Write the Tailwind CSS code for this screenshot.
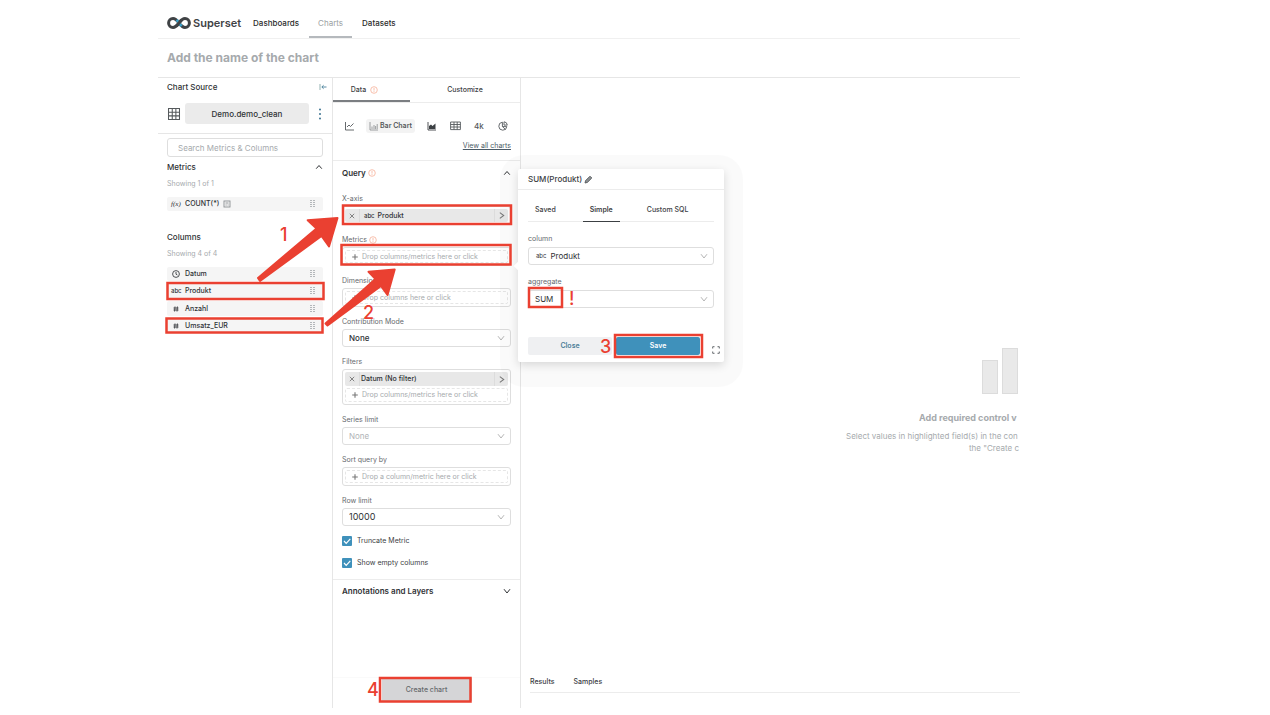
<!DOCTYPE html>
<html lang="en">
<head>
    <meta charset="UTF-8">
    <meta name="viewport" content="width=device-width, initial-scale=1.0">
    <title>Superset - Charts</title>
    <script src="https://cdn.jsdelivr.net/npm/@tailwindcss/browser@4"></script>
</head>
<body class="relative bg-white font-['Inter','Liberation_Sans',sans-serif] text-[7px] leading-[14px] text-[#3c4043]">

    <!-- shared icons -->
    <svg class="hidden">
        <symbol id="grip" viewBox="0 0 6 8"><g fill="#b4b7ba"><rect x="0" y="0" width="2" height="1"/><rect x="3" y="0" width="2" height="1"/><rect x="0" y="2" width="2" height="1"/><rect x="3" y="2" width="2" height="1"/><rect x="0" y="4" width="2" height="1"/><rect x="3" y="4" width="2" height="1"/><rect x="0" y="6" width="2" height="1"/><rect x="3" y="6" width="2" height="1"/></g></symbol>
        <symbol id="down" viewBox="0 0 8 8"><path d="M1 2.200 4 6l3-3.800" fill="none" stroke="currentColor" stroke-width="1"/></symbol>
        <symbol id="up" viewBox="0 0 8 8"><path d="M1.200 5.700 4 2.500l2.800 3.200" fill="none" stroke="currentColor" stroke-width="1"/></symbol>
        <symbol id="right" viewBox="0 0 8 8"><path d="M2.500 1.400 6 4 2.500 6.600" fill="none" stroke="currentColor" stroke-width=".9"/></symbol>
        <symbol id="cross" viewBox="0 0 8 8"><path d="M1.800 1.800l4.400 4.400M6.200 1.800 1.800 6.200" fill="none" stroke="currentColor" stroke-width=".9"/></symbol>
        <symbol id="plus" viewBox="0 0 8 8"><path d="M4 1.200v5.600M1.200 4h5.600" fill="none" stroke="currentColor" stroke-width="1.100"/></symbol>
        <symbol id="alert" viewBox="0 0 8 8"><circle cx="4" cy="4" r="3.300" fill="none" stroke="#f7b9a4" stroke-width=".9"/><path d="M4 2v2.600M4 5.200v.9" stroke="#f7b9a4" stroke-width=".9"/></symbol>
        <symbol id="hash" viewBox="0 0 8 8"><path d="M3 1.500 2.600 6.500M5.400 1.500 5 6.500M1.500 3h5M1.500 5h5" fill="none" stroke="#3c4043" stroke-width=".9"/></symbol>
        <symbol id="table" viewBox="0 0 12 12"><path d="M1.300 1.300h9.400v9.400H1.300zM1.300 4.500h9.400M1.300 7.600h9.400M4.500 1.300v9.400M7.600 1.300v9.400" fill="none" stroke="currentColor" stroke-width=".9"/></symbol>
        <symbol id="check" viewBox="0 0 10 10"><path d="M2 5l2.200 2.300L8.300 2.800" fill="none" stroke="#fff" stroke-width="1.200"/></symbol>
    </svg>

    <div class="ml-[158px] mr-[250px] flex flex-col">

        <!-- top navigation -->
        <header class="flex h-[39px] items-stretch border-b border-[#f0f0f0] pl-2 text-[8px] font-medium text-[#2b2b2b]">
            <a href="#" class="flex items-center pt-2 pr-1">
                <svg class="h-[14px] w-[26px]" viewBox="0 0 26 14" fill="none" stroke-width="3">
                    <path d="M13 7C10.800 4 9.300 2.600 7 2.600a4.400 4.400 0 0 0 0 8.800c2.300 0 3.800-1.400 6-4.400" stroke="#3f4245"/>
                    <path d="M13 7c2.200-3 3.700-4.400 6-4.400a4.400 4.400 0 0 1 0 8.800c-2.300 0-3.800-1.400-6-4.400" stroke="#3f4245"/>
                    <path d="M10.600 3.900 13.200 7M13 7.200l2.600 3" stroke="#3aa3cc" stroke-width="2.600"/>
                    <path d="M10.300 10.200 15.700 3.800" stroke="#3f4245"/>
                </svg>
                <span class="pl-px text-[11px] font-semibold text-[#3f4245]">Superset</span>
            </a>
            <nav class="flex items-stretch">
                <a href="#" class="flex items-center pt-2 pr-[10px] pl-2">Dashboards</a>
                <a href="#" class="flex items-center border-b-2 border-[#b5b9bd] px-[9px] pt-[10px] font-normal text-[#9b9fa3]">Charts</a>
                <a href="#" class="flex items-center px-[10px] pt-2">Datasets</a>
            </nav>
        </header>

        <div class="flex h-[39px] items-center border-b border-[#e6e6e6] pl-[9px]">
            <input type="text" aria-label="Chart name" placeholder="Add the name of the chart" class="w-full text-[12px] font-bold outline-none placeholder:text-[#a6aaad]">
        </div>

        <div class="flex h-[630px] items-stretch">

            <!-- chart source -->
            <aside class="flex w-[175px] shrink-0 flex-col border-r border-[#e6e6e6]">
                <div class="flex h-[18px] items-center justify-between pr-[5px] pl-[9px] text-[8px] font-medium text-[#2f3235]">
                    <h2>Chart Source</h2>
                    <svg class="size-2" viewBox="0 0 8 8" fill="none" stroke-width=".9"><path d="M1 1v6" stroke="#8aa"/><path d="M7.500 4H3M4.600 2.300 2.800 4l1.800 1.700" stroke="#47809b"/></svg>
                </div>
                <div class="mt-[7px] flex items-center pr-[10px] pl-[9px]">
                    <svg class="size-[14px] text-[#55595c]"><use href="#table"/></svg>
                    <button type="button" class="ml-1 h-[21px] flex-1 rounded-[3px] bg-[#ebebeb] text-[8px] font-medium text-[#2f3235]">Demo.demo_clean</button>
                    <svg class="ml-[9px] h-3 w-1" viewBox="0 0 4 12" fill="#3c7391"><circle cx="2" cy="1.500" r="1"/><circle cx="2" cy="6" r="1"/><circle cx="2" cy="10.500" r="1"/></svg>
                </div>
                <div class="mt-[9px] border-t border-[#e6e6e6] pt-1 pr-[9px] pl-[9px]">
                    <input type="search" aria-label="Search Metrics &amp; Columns" placeholder="Search Metrics &amp; Columns" class="block h-[19px] w-full rounded-[3px] border border-[#dedede] px-[10px] text-[8px] outline-none placeholder:text-[#a6aaad]">

                    <div class="mt-[3px] flex items-center justify-between text-[8px] font-medium text-[#2f3235]">
                        <h3>Metrics</h3>
                        <svg class="size-2"><use href="#up"/></svg>
                    </div>
                    <p class="mt-[3px] text-[#a6aaad]">Showing 1 of 1</p>
                    <div class="mt-[6px] flex h-[14px] items-center rounded-[2px] bg-[#f5f5f5] pr-[7px] pl-1 text-[#2f3235]">
                        <i class="w-[14px] font-['Liberation_Serif',serif] text-[7px]">f(x)</i>
                        <span class="font-medium">COUNT(*)</span>
                        <svg class="ml-1 size-2" viewBox="0 0 8 8" fill="none" stroke="#8c9093" stroke-width=".9"><rect x="1" y="1" width="6" height="6"/><path d="M2.500 3h3M2.500 5h1.200M4.600 5h1"/></svg>
                        <svg class="ml-auto h-2 w-[6px]"><use href="#grip"/></svg>
                    </div>

                    <h3 class="mt-[19px] text-[8px] font-medium text-[#2f3235]">Columns</h3>
                    <p class="mt-[3px] text-[#a6aaad]">Showing 4 of 4</p>
                    <ul class="mt-[6px] flex flex-col gap-[3px] font-medium text-[#2f3235]">
                        <li class="flex h-[14px] items-center rounded-[2px] bg-[#f5f5f5] pr-[7px] pl-1">
                            <span class="w-[14px]"><svg class="ml-px size-2" viewBox="0 0 8 8" fill="none" stroke="#3c4043" stroke-width=".9"><circle cx="4" cy="4" r="3.400"/><path d="M4 2v2.200l1.400.8"/></svg></span>
                            <span>Datum</span>
                            <svg class="ml-auto h-2 w-[6px]"><use href="#grip"/></svg>
                        </li>
                        <li class="flex h-[14px] items-center rounded-[2px] bg-[#f5f5f5] pr-[7px] pl-1">
                            <span class="w-[14px] text-[6px]">abc</span>
                            <span>Produkt</span>
                            <svg class="ml-auto h-2 w-[6px]"><use href="#grip"/></svg>
                        </li>
                        <li class="flex h-[15px] items-center rounded-[2px] bg-[#f5f5f5] pr-[7px] pl-1">
                            <span class="w-[14px]"><svg class="ml-px size-2"><use href="#hash"/></svg></span>
                            <span>Anzahl</span>
                            <svg class="ml-auto h-2 w-[6px]"><use href="#grip"/></svg>
                        </li>
                        <li class="flex h-[14px] items-center rounded-[2px] bg-[#f5f5f5] pr-[7px] pl-1">
                            <span class="w-[14px]"><svg class="ml-px size-2"><use href="#hash"/></svg></span>
                            <span>Umsatz_EUR</span>
                            <svg class="ml-auto h-2 w-[6px]"><use href="#grip"/></svg>
                        </li>
                    </ul>
                </div>
            </aside>

            <!-- controls -->
            <section class="flex w-[188px] shrink-0 flex-col border-r border-[#e6e6e6]">
                <div class="flex h-[25px] border-b border-[#ececec] font-medium">
                    <button type="button" class="flex w-[77px] items-center justify-center gap-1 border-b-2 border-[#7b7e82] pt-[2px] pr-[14px]">Data <svg class="size-2"><use href="#alert"/></svg></button>
                    <button type="button" class="flex-1">Customize</button>
                </div>

                <div class="border-b border-[#ececec] px-[9px] pt-4 pb-[7px]">
                    <div class="flex items-center text-[#55595c]">
                        <svg class="ml-[2px] h-[10px] w-[11px]" viewBox="0 0 11 10" fill="none" stroke="currentColor" stroke-width=".9"><path d="M1.500 1v8H10M3 6l2-2 1.500 1.500L9.500 2.500"/></svg>
                        <button type="button" class="ml-[11px] flex h-[14px] items-center gap-[2px] rounded-[3px] bg-[#f3f3f3] px-[3px] font-semibold">
                            <svg class="h-[10px] w-[9px]" viewBox="0 0 9 10" fill="none" stroke="#85898c" stroke-width=".8"><path d="M1 1v8h8M3 8V5.500M5 8V4M6.600 8V5M8.200 8V3"/></svg>
                            Bar Chart
                        </button>
                        <svg class="ml-3 h-[10px] w-[9px]" viewBox="0 0 9 10"><path d="M1 1v8h8" fill="none" stroke="#3c4043" stroke-width=".9"/><path d="M2 8V5l2-1.500L5.500 5 8.500 2.500V8z" fill="#3c4043"/></svg>
                        <svg class="ml-[14px] h-[10px] w-[11px]" viewBox="0 0 11 10" fill="none" stroke="currentColor" stroke-width=".9"><path d="M.6 1h9.800v7.600H.6zM.6 3.500h9.800M.6 6h9.800M4 1v7.600M7.200 1v7.600"/></svg>
                        <span class="ml-[13px] text-[8px] font-medium">4k</span>
                        <svg class="ml-[14px] size-[10px]" viewBox="0 0 10 10" fill="none" stroke="currentColor" stroke-width=".9"><path d="M4.400 1.200a4 4 0 1 0 4.400 4.400H4.400zM4.500 5.600l2.900 2.800M6 .8a3.600 3.600 0 0 1 3.300 3.300H6z"/></svg>
                    </div>
                    <div class="mt-[6px] text-right"><a href="#" class="text-[#4b5a66] underline">View all charts</a></div>
                </div>

                <div class="px-[9px] pt-[5px]">
                    <div class="flex items-center gap-[2px] text-[8px] font-medium text-[#2f3235]">
                        <h3 class="font-semibold">Query</h3>
                        <svg class="size-2"><use href="#alert"/></svg>
                        <svg class="ml-auto size-2"><use href="#up"/></svg>
                    </div>

                    <div class="mt-3 flex flex-col gap-2 text-[#666a6e]">
                        <div>
                            <p>X-axis</p>
                            <div class="h-[19px] rounded-[3px] border border-[#dedede] p-[2px]">
                                <div class="flex h-[13px] items-center rounded-[2px] bg-[#e8e8e8] font-medium text-[#2f3235]">
                                    <svg class="mx-[3px] size-2 text-[#777]"><use href="#cross"/></svg>
                                    <span class="h-full border-l border-[#dcdcdc] pl-1 text-[6px]">abc</span>
                                    <span class="pl-[3px]">Produkt</span>
                                    <span class="ml-auto flex h-full items-center border-l border-[#dcdcdc] px-[2px]"><svg class="size-[9px] text-[#777]"><use href="#right"/></svg></span>
                                </div>
                            </div>
                        </div>
                        <div>
                            <p class="flex items-center gap-[2px]">Metrics <svg class="size-2"><use href="#alert"/></svg></p>
                            <div class="h-[19px] rounded-[3px] border border-[#dedede] p-[2px]">
                                <button type="button" class="flex h-[13px] w-full items-center gap-[3px] rounded-[2px] border border-dashed border-[#e6e6e6] pl-[5px] text-[#a6aaad]"><svg class="size-2 text-[#777]"><use href="#plus"/></svg>Drop columns/metrics here or click</button>
                            </div>
                        </div>
                        <div>
                            <p>Dimensions</p>
                            <div class="h-[19px] rounded-[3px] border border-[#dedede] p-[2px]">
                                <button type="button" class="flex h-[13px] w-full items-center gap-[3px] rounded-[2px] border border-dashed border-[#e6e6e6] pl-[5px] text-[#a6aaad]"><svg class="size-2 text-[#777]"><use href="#plus"/></svg>Drop columns here or click</button>
                            </div>
                        </div>
                        <div>
                            <label for="contribution" class="block">Contribution Mode</label>
                            <div class="relative">
                                <select id="contribution" class="block h-[18px] w-full appearance-none rounded-[3px] border border-[#dedede] pl-[6px] text-[8px] font-medium text-[#2f3235]"><option>None</option></select>
                                <svg class="pointer-events-none absolute top-[5px] right-[6px] size-2 text-[#b5b5b5]"><use href="#down"/></svg>
                            </div>
                        </div>
                        <div>
                            <p>Filters</p>
                            <div class="flex h-[36px] flex-col justify-between rounded-[3px] border border-[#dedede] p-[2px]">
                                <div class="flex h-[14px] items-center rounded-[2px] bg-[#e8e8e8] font-medium text-[#2f3235]">
                                    <svg class="mx-[3px] size-2 text-[#777]"><use href="#cross"/></svg>
                                    <span class="h-full border-l border-[#dcdcdc] pl-px">Datum (No filter)</span>
                                    <span class="ml-auto flex h-full items-center border-l border-[#dcdcdc] px-[2px]"><svg class="size-[9px] text-[#777]"><use href="#right"/></svg></span>
                                </div>
                                <button type="button" class="flex h-[14px] w-full items-center gap-[3px] rounded-[2px] border border-dashed border-[#e6e6e6] pl-[5px] text-[#a6aaad]"><svg class="size-2 text-[#777]"><use href="#plus"/></svg>Drop columns/metrics here or click</button>
                            </div>
                        </div>
                        <div>
                            <label for="series" class="block">Series limit</label>
                            <div class="relative">
                                <select id="series" class="block h-[18px] w-full appearance-none rounded-[3px] border border-[#dedede] pl-[6px] text-[8px] text-[#b0b3b6]"><option>None</option></select>
                                <svg class="pointer-events-none absolute top-[5px] right-[6px] size-2 text-[#b5b5b5]"><use href="#down"/></svg>
                            </div>
                        </div>
                        <div>
                            <p>Sort query by</p>
                            <div class="h-[19px] rounded-[3px] border border-[#dedede] p-[2px]">
                                <button type="button" class="flex h-[13px] w-full items-center gap-[3px] rounded-[2px] border border-dashed border-[#e6e6e6] pl-[5px] text-[#a6aaad]"><svg class="size-2 text-[#777]"><use href="#plus"/></svg>Drop a column/metric here or click</button>
                            </div>
                        </div>
                        <div>
                            <label for="rows" class="block">Row limit</label>
                            <div class="relative">
                                <select id="rows" class="block h-[18px] w-full appearance-none rounded-[3px] border border-[#dedede] pl-[6px] text-[9px] text-[#2f3235]"><option>10000</option></select>
                                <svg class="pointer-events-none absolute top-[5px] right-[6px] size-2 text-[#b5b5b5]"><use href="#down"/></svg>
                            </div>
                        </div>
                        <label class="relative flex items-center gap-[5px] text-[#3c4043]">
                            <input type="checkbox" checked class="size-[10px] appearance-none rounded-[1px] bg-[#3f91bb]">
                            <svg class="pointer-events-none absolute left-0 size-[10px]"><use href="#check"/></svg>
                            Truncate Metric
                        </label>
                        <label class="relative flex items-center gap-[5px] text-[#3c4043]">
                            <input type="checkbox" checked class="size-[10px] appearance-none rounded-[1px] bg-[#3f91bb]">
                            <svg class="pointer-events-none absolute left-0 size-[10px]"><use href="#check"/></svg>
                            Show empty columns
                        </label>
                    </div>
                </div>

                <div class="mt-[9px] flex items-center justify-between border-t border-[#ececec] px-[9px] pt-1 text-[8px] text-[#2f3235]">
                    <h3 class="font-semibold">Annotations and Layers</h3>
                    <svg class="size-2"><use href="#down"/></svg>
                </div>

                <div class="mt-auto flex justify-center border-t border-[#fafafa] pb-[7px]">
                    <button type="button" class="h-[23px] w-[90px] bg-[#d5d5d7] font-medium text-[#66696c]">Create chart</button>
                </div>
            </section>

            <!-- preview -->
            <main class="flex min-w-0 flex-1 flex-col overflow-hidden whitespace-nowrap">
                <div class="flex flex-1 flex-col items-end pt-[270px] text-[#a6aaad]">
                    <svg class="mr-px h-[46px] w-[38px]" viewBox="0 0 38 46" fill="#e9e9e9" stroke="#dcdcdc"><rect x="1.500" y="12.500" width="15" height="33"/><rect x="21.500" y=".5" width="15" height="45"/></svg>
                    <h2 class="mt-[17px] w-[101px] text-[9px] font-bold">Add required control v</h2>
                    <p class="mt-1 w-[174px] text-[8px]">Select values in highlighted field(s) in the con</p>
                    <p class="-mt-[2px] w-[51px] text-[8px]">the "Create c</p>
                </div>
                <div class="mb-[15px] ml-[9px] flex h-[18px] gap-[19px] border-b border-[#ececec] font-medium">
                    <button type="button" class="h-[14px]">Results</button>
                    <button type="button" class="h-[14px]">Samples</button>
                </div>
            </main>
        </div>
    </div>

    <!-- metric popover -->
    <div class="absolute top-[155px] left-[500px] h-[232px] w-[243px] rounded-3xl bg-black/2"></div>
    <div class="absolute top-[169px] left-[518px] w-[206px] rounded-[2px] bg-white pb-[7px] shadow-[0_3px_10px_rgba(0,0,0,0.14)]">
        <div class="absolute top-[94px] -left-[3px] size-[6px] rotate-45 bg-white"></div>
        <div class="flex h-[21px] items-center gap-[2px] border-b border-[#ececec] px-[10px] text-[8px] font-medium text-[#3c4043]">
            SUM(Produkt)
            <svg class="size-[9px]" viewBox="0 0 9 9"><path d="M1 8l.6-2.400L6 1.200l1.800 1.800L3.400 7.400z" fill="#8c9093" stroke="#55595c" stroke-width=".9"/></svg>
        </div>
        <div class="px-[10px]">
            <div class="mt-2 flex h-[24px] border-b border-[#ececec] font-medium">
                <button type="button" class="px-[7px]">Saved</button>
                <button type="button" class="-mb-px ml-5 border-b border-[#3c4043] px-[7px] font-semibold">Simple</button>
                <button type="button" class="ml-5 px-[7px]">Custom SQL</button>
            </div>
            <label for="column" class="mt-[10px] block text-[#666a6e]">column</label>
            <div class="mt-px flex h-[18px] items-center rounded-[3px] border border-[#dedede] pr-[5px] pl-[7px] text-[#2f3235]">
                <span class="text-[6px]">abc</span>
                <select id="column" class="flex-1 appearance-none pl-1 text-[8px]"><option>Produkt</option></select>
                <svg class="size-2 text-[#b5b5b5]"><use href="#down"/></svg>
            </div>
            <label for="aggregate" class="mt-[10px] block text-[#666a6e]">aggregate</label>
            <div class="mt-px flex h-[18px] items-center rounded-[3px] border border-[#dedede] pr-[5px] pl-[6px] text-[#2f3235]">
                <select id="aggregate" class="flex-1 appearance-none text-[8px]"><option>SUM</option></select>
                <svg class="size-2 text-[#b5b5b5]"><use href="#down"/></svg>
            </div>
            <div class="mt-[29px] flex gap-1 pr-[14px] font-semibold">
                <button type="button" class="h-[18px] flex-1 rounded-[2px] bg-[#eff0f2] text-[#4d7f99]">Close</button>
                <button type="button" class="h-[18px] flex-1 rounded-[2px] bg-[#3f91bb] text-white">Save</button>
            </div>
        </div>
        <svg class="absolute right-1 bottom-2 size-2" viewBox="0 0 8 8" fill="none" stroke="#666a6e"><path d="M.7 2.500V.7h1.800M5.500.7h1.800v1.800M7.300 5.500v1.800H5.500M2.500 7.300H.7V5.500"/></svg>
    </div>

    <!-- numbered steps drawn over the page -->
    <svg class="pointer-events-none absolute top-0 left-0 h-[708px] w-[800px]" viewBox="0 0 800 708">
        <g fill="none" stroke="#ea4031" stroke-width="2.500">
            <rect x="167.500" y="283" width="156" height="16"/>
            <rect x="166.500" y="318.500" width="156" height="14"/>
            <rect x="343" y="205.500" width="168" height="18.500"/>
            <rect x="341.500" y="245" width="169" height="19.500"/>
            <rect x="529" y="288" width="33" height="19"/>
            <rect x="615" y="335" width="87" height="22"/>
            <rect x="380" y="678" width="90.500" height="23.500"/>
        </g>
        <g fill="#ea4031" stroke="#ea4031" stroke-width="2" stroke-linejoin="round">
            <path d="M258 278 316.500 228.500 307.700 220.300 337.500 218 329 246.500 321.500 236 260 281z"/>
            <path d="M325.500 323.500 375.500 279 368.500 271.700 394.700 269.500 387.500 295 381 286 327.500 325.500z"/>
        </g>
        <g fill="#ea4031" class="text-[18px] font-medium">
            <text x="280" y="241">1</text>
            <text x="363" y="319">2</text>
            <text x="600" y="353">3</text>
            <text x="367" y="696">4</text>
            <text x="569" y="305">!</text>
        </g>
    </svg>
</body>
</html>
